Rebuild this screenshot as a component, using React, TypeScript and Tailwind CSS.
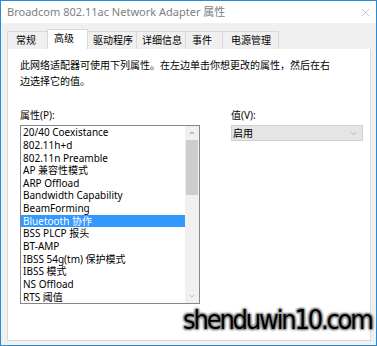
import { ChevronDown, ChevronUp, X } from "lucide-react";

const props = [
  "20/40 Coexistance",
  "802.11h+d",
  "802.11n Preamble",
  "AP 兼容性模式",
  "ARP Offload",
  "Bandwidth Capability",
  "BeamForming",
  "Bluetooth 协作",
  "BSS PLCP 报头",
  "BT-AMP",
  "IBSS 54g(tm) 保护模式",
  "IBSS 模式",
  "NS Offload",
  "RTS 阈值",
];

const SELECTED = 7;

export default function App() {
  return (
    <div className="relative flex h-[346px] w-[377px] flex-col overflow-hidden border border-[#2b8ad4] bg-[#f0f0f0] font-['Noto_Sans','Noto_Sans_CJK_SC',sans-serif] text-[10px] text-black">
      {/* title bar */}
      <div className="flex h-[22px] items-center justify-between bg-white pl-[6px] pr-[4px]">
        <span className="text-[11px] text-[#808080]">Broadcom 802.11ac Network Adapter 属性</span>
        <X size={13} strokeWidth={1} className="text-[#9a9a9a]" />
      </div>

      {/* tabs */}
      <div className="mt-[6px] flex h-[20px] items-end pl-[6px]">
        <div className="flex h-[18px] w-[40px] items-center border-l border-t border-[#d9d9d9] pl-[8px]">常规</div>
        <div className="flex h-[20px] w-[41px] items-center border-x border-t border-[#d9d9d9] bg-white pl-[6px] pb-[2px]">高级</div>
        <div className="flex h-[18px] w-[49px] items-center border-r border-t border-[#d9d9d9] pl-[5px]">驱动程序</div>
        <div className="flex h-[18px] w-[49px] items-center border-r border-t border-[#d9d9d9] pl-[5px]">详细信息</div>
        <div className="flex h-[18px] w-[37px] items-center border-r border-t border-[#d9d9d9] pl-[6px]">事件</div>
        <div className="flex h-[18px] w-[56px] items-center border-r border-t border-[#d9d9d9] pl-[8px]">电源管理</div>
      </div>

      {/* panel */}
      <div className="mb-[4px] ml-[6px] mr-[5px] flex-1 border border-[#d9d9d9] border-t-0 bg-white pl-[12px] pt-[9px]">
        <p className="w-[312px] leading-[15.6px]">
          此网络适配器可使用下列属性。在左边单击你想更改的属性，然后在右边选择它的值。
        </p>

        <div className="mt-[18px] flex gap-[31px]">
          <div className="flex w-[180px] flex-col">
            <span className="leading-[16px]">属性(P):</span>
            <div className="mt-[2px] flex border border-[#828790]">
              <div className="flex w-[164px] flex-col">
                {props.map((p, i) => (
                  <div
                    key={p}
                    className={
                      i === SELECTED
                        ? "h-[12.67px] whitespace-nowrap bg-[#3399ff] pl-[2px] leading-[12.67px] text-white"
                        : "h-[12.67px] whitespace-nowrap pl-[2px] leading-[12.67px]"
                    }
                  >
                    {p}
                  </div>
                ))}
              </div>
              <div className="flex w-[14px] flex-col items-center bg-[#f0f0f0]">
                <div className="flex h-[14px] items-center justify-center">
                  <ChevronUp size={8} strokeWidth={2} className="text-[#606060]" />
                </div>
                <div className="h-[55px] w-[12px] bg-[#cdcdcd]" />
                <div className="flex-1" />
                <div className="flex h-[14px] items-center justify-center">
                  <ChevronDown size={8} strokeWidth={2} className="text-[#a0a0a0]" />
                </div>
              </div>
            </div>
          </div>

          <div className="flex w-[132px] flex-col">
            <span className="leading-[16px]">值(V):</span>
            <div className="mt-[2px] flex h-[16px] items-center justify-between border border-[#d0d0d0] bg-[#e5e5e5] pl-[1px] pr-[4px]">
              <span>启用</span>
              <ChevronDown size={9} strokeWidth={1.5} className="text-[#8a8a8a]" />
            </div>
          </div>
        </div>
      </div>

      {/* watermark */}
      <div className="absolute left-[182px] top-[300px] whitespace-nowrap font-['DejaVu_Sans_Condensed','DejaVu_Sans',sans-serif] text-[27px] leading-[38px] tracking-[-2.2px] text-black [text-shadow:0_0_2px_#888,1px_1px_2px_#888,-1px_-1px_2px_#888,1px_-1px_2px_#888,-1px_1px_2px_#888]">
        shenduwin10.com
      </div>
    </div>
  );
}
